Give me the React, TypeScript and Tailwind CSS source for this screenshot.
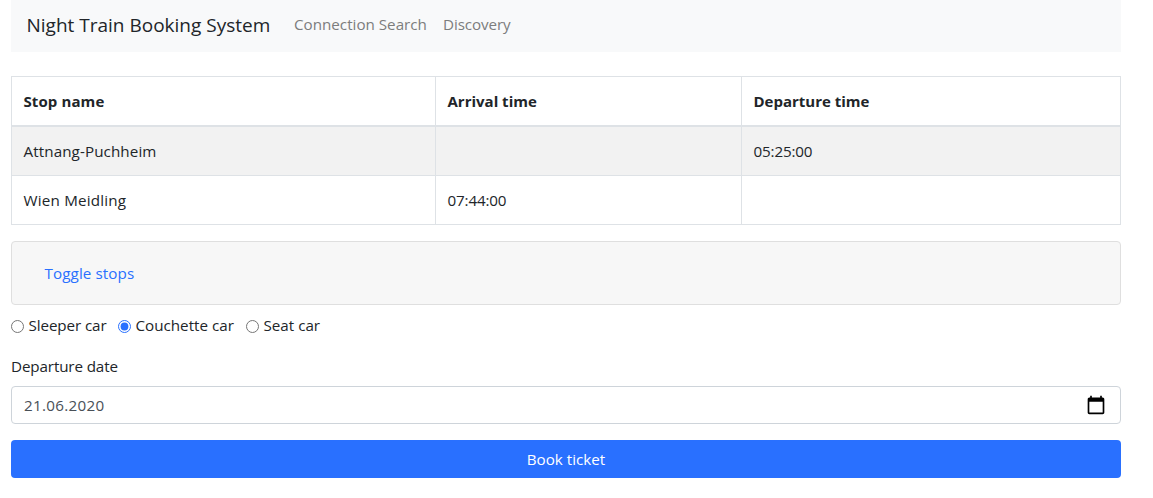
const stops = [
  { name: "Attnang-Puchheim", tracking: "tracking-[0.1px]", arrival: "", departure: "05:25:00" },
  { name: "Wien Meidling", tracking: "tracking-[0.2px]", arrival: "07:44:00", departure: "" },
];

const cars = [
  { label: "Sleeper car", checked: false, width: "w-[107px]", tracking: "tracking-[-0.1px]" },
  { label: "Couchette car", checked: true, width: "w-[128px]", tracking: "tracking-normal" },
  { label: "Seat car", checked: false, width: "w-[90px]", tracking: "tracking-normal" },
];

const cell = "border-r border-[#dee2e6] pl-[11.5px] pr-3";

export default function App() {
  return (
    <div className="h-[498px] w-full overflow-hidden bg-white pl-[11px] pr-8 font-['Open_Sans','Noto_Sans',sans-serif] text-[15.2px] leading-6 text-[#212529]">
      <nav className="flex h-[52px] items-center bg-[#f8f9fa] pb-0.5 pl-[15.5px]">
        <a className="w-[267.5px] whitespace-nowrap text-[19px]">Night Train Booking System</a>
        <a className="w-[149px] whitespace-nowrap pb-0.5 text-[#7c7d7d]">Connection Search</a>
        <a className="pb-0.5 tracking-[-0.1px] text-[#7c7d7d]">Discovery</a>
      </nav>
      <table className="mt-6 w-full table-fixed border-collapse border border-[#dee2e6] text-left">
        <thead>
          <tr className="h-[49px] border-b-2 border-[#dee2e6] text-[15px] font-bold">
            <th className={`${cell} w-[424px] tracking-[0.1px]`}>Stop name</th>
            <th className={`${cell} w-[306px]`}>Arrival time</th>
            <th className={cell}>Departure time</th>
          </tr>
        </thead>
        <tbody>
          {stops.map((stop) => (
            <tr key={stop.name} className="h-[49px] border-b border-[#dee2e6] odd:h-[50px] odd:bg-[#f2f2f2]">
              <td className={`${cell} ${stop.tracking}`}>{stop.name}</td>
              <td className={`${cell} tracking-[-0.15px]`}>{stop.arrival}</td>
              <td className={`${cell} tracking-[-0.15px]`}>{stop.departure}</td>
            </tr>
          ))}
        </tbody>
      </table>
      <section className="mt-4 flex h-16 items-center rounded border border-[#dfdfdf] bg-[#f7f7f7] pl-[32.5px]">
        <a className="tracking-[0.1px] text-[#2970ff]">Toggle stops</a>
      </section>
      <div className="mt-[9px] flex h-6">
        {cars.map((car) => (
          <label key={car.label} className={`flex items-center gap-[4.5px] ${car.width}`}>
            <input type="radio" name="car" defaultChecked={car.checked} className="size-[13px] accent-[#2970ff]" />
            <span className={`whitespace-nowrap pb-0.5 ${car.tracking}`}>{car.label}</span>
          </label>
        ))}
      </div>
      <div className="mt-4 h-8 tracking-[-0.12px]">Departure date</div>
      <div className="flex h-[38px] items-center justify-between rounded border border-[#ced4da] pl-3 pr-3.5">
        <span className="tracking-[0.3px] text-[#495057]">21.06.2020</span>
        <svg className="size-5" viewBox="0 0 24 24" fill="black">
          <path d="M20 3h-1V1h-2v2H7V1H5v2H4c-1.1 0-2 .9-2 2v16c0 1.1.9 2 2 2h16c1.1 0 2-.9 2-2V5c0-1.1-.9-2-2-2zm0 18H4V8h16v13z" />
        </svg>
      </div>
      <button className="mt-4 h-[38px] w-full rounded bg-[#2970ff] text-white">Book ticket</button>
    </div>
  );
}
